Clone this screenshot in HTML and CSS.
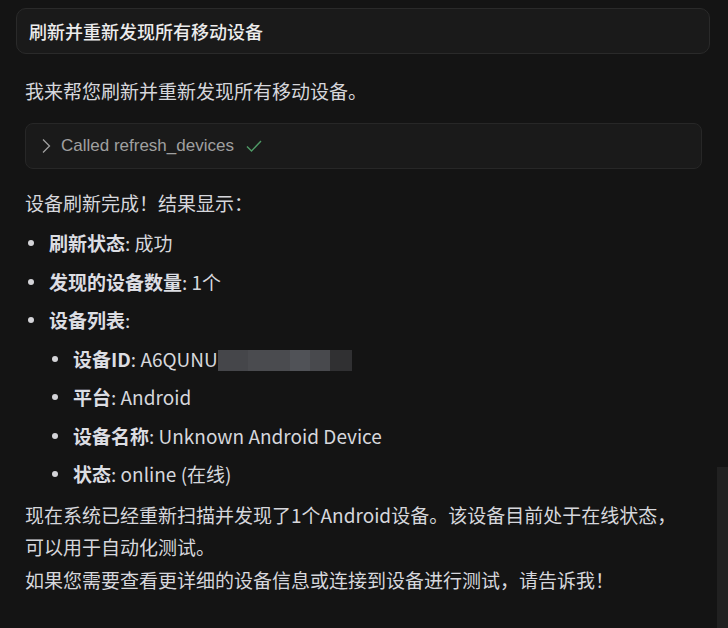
FILE: index.html
```html
<!DOCTYPE html>
<html lang="zh-CN">
<head>
<meta charset="utf-8">
<title>刷新设备</title>
<link rel="stylesheet" href="styles.css">
</head>
<body>
<div class="page">
  <div class="prompt">刷新并重新发现所有移动设备</div>
  <div class="answer">
    <p class="para first">我来帮您刷新并重新发现所有移动设备。</p>
    <div class="tool">
      <svg class="chev" width="10" height="16" viewBox="0 0 10 16"><path d="M2 1.5 L8.5 8 L2 14.5" fill="none" stroke="#a0a0a0" stroke-width="1.3"/></svg>
      <span class="tool-text">Called refresh_devices</span>
      <svg class="check" width="16" height="12" viewBox="0 0 16 12"><path d="M1 6.5 L5.5 11 L15 1" fill="none" stroke="#4f9a66" stroke-width="1.4"/></svg>
    </div>
    <p class="para">设备刷新完成！结果显示：</p>
    <ul class="list">
      <li><b>刷新状态</b>: 成功</li>
      <li><b>发现的设备数量</b>: 1个</li>
      <li><b>设备列表</b>:
        <ul class="list sub">
          <li><b>设备ID</b>: A6QUNU<span class="redact"></span></li>
          <li><b>平台</b>: Android</li>
          <li><b>设备名称</b>: Unknown Android Device</li>
          <li><b>状态</b>: online (在线)</li>
        </ul>
      </li>
    </ul>
    <p class="para after">现在系统已经重新扫描并发现了1个Android设备。该设备目前处于在线状态，可以用于自动化测试。</p>
    <p class="para tight">如果您需要查看更详细的设备信息或连接到设备进行测试，请告诉我！</p>
  </div>
  <div class="scrollbar"></div>
</div>
</body>
</html>
```
FILE: styles.css
```css
html, body {
  margin: 0;
  padding: 0;
  background: #141414;
}
body {
  width: 728px;
  height: 628px;
  overflow: hidden;
  font-family: "Noto Sans CJK SC", "Noto Sans", sans-serif;
  color: #d6d7dc;
}
.page {
  position: relative;
  height: 628px;
  padding-top: 8px;
  box-sizing: border-box;
}
.prompt {
  margin: 0 18px 0 16px;
  height: 46px;
  box-sizing: border-box;
  border: 1px solid #2a2a2a;
  border-radius: 10px;
  background: #1a1a1a;
  padding-left: 12px;
  display: flex;
  align-items: center;
  font-size: 18px;
  font-weight: 500;
  color: #ececec;
}
.answer {
  padding: 0 26px 0 25px;
}
.para {
  margin: 0;
  font-size: 19px;
  line-height: 32px;
}
.para.first {
  margin-top: 21px;
}
.tool {
  margin-top: 16px;
  height: 46px;
  box-sizing: border-box;
  border: 1px solid #272727;
  border-radius: 8px;
  background: #1a1a1a;
  display: flex;
  align-items: center;
  padding-left: 15px;
}
.chev {
  margin-right: 10px;
}
.tool-text {
  font-family: "Liberation Sans", sans-serif;
  font-size: 17px;
  color: #a0a0a0;
  margin-right: 12px;
}
.tool + .para {
  margin-top: 18px;
}
.list {
  list-style: none;
  margin: 8px 0 0 0;
  padding: 0 0 0 24px;
  font-size: 19px;
  line-height: 32px;
}
.list li {
  position: relative;
  margin-top: 6.5px;
}
.list li:first-child {
  margin-top: 0;
}
.list li::before {
  content: "";
  position: absolute;
  left: -21px;
  top: 13px;
  width: 6px;
  height: 6px;
  border-radius: 50%;
  background: #d4d4d8;
}
.list.sub {
  margin-top: 6.5px;
}
.list b {
  font-weight: 700;
  color: #dcdde2;
}
.redact {
  display: inline-block;
  width: 134px;
  height: 21px;
  vertical-align: -4px;
  background: linear-gradient(90deg, #45464a 0, #45464a 30px, #4a4b4f 30px, #4a4b4f 72px, #505257 72px, #505257 92px, #48494d 92px, #48494d 112px, #303032 112px, #303032 134px);
}
.para.after {
  margin-top: 9px;
  max-width: 662px;
}
.para.tight {
  margin-top: 1px;
}
.scrollbar {
  position: absolute;
  right: 0;
  top: 467px;
  width: 11px;
  height: 161px;
  background: #212121;
}
```
